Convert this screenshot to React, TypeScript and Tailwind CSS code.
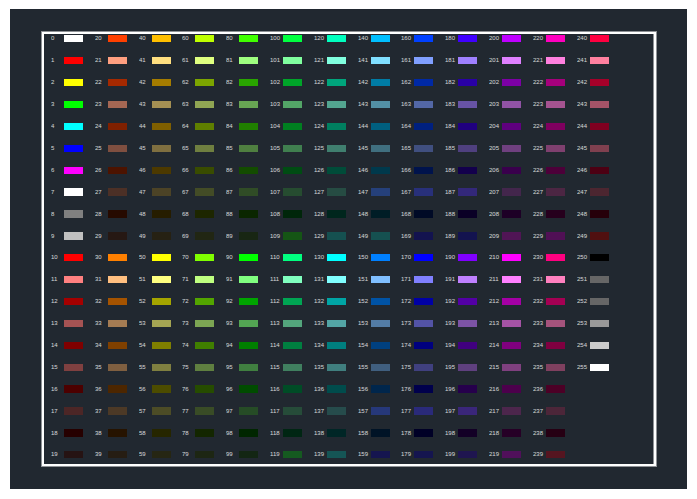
// AutoCAD colour index chart
const overrides: Record<number, string> = {
  109: "#155515",
  119: "#155a20",
  129: "#155050",
  139: "#155555",
  147: "#25407a",
  149: "#155050",
  157: "#26387a",
  159: "#15154f",
  167: "#28307a",
  169: "#13134f",
  177: "#2a2a7a",
  179: "#15154f",
  187: "#33287a",
  189: "#13134f",
  197: "#3a267a",
  199: "#1f1550",
  209: "#501555",
  219: "#50105a",
  229: "#501055",
  239: "#551520",
  249: "#501010",
  250: "#000000",
  251: "#666666",
  252: "#666666",
  253: "#999999",
  254: "#cccccc",
  255: "#ffffff",
};

const basics = ["#ffffff", "#ff0000", "#ffff00", "#00ff00", "#00ffff", "#0000ff", "#ff00ff", "#ffffff", "#808080", "#c0c0c0"];
const values = [255, 165, 127, 76, 38];

function hue(h: number, n: number) {
  const k = (n + h / 60) % 6;
  return 1 - Math.max(0, Math.min(k, 4 - k, 1));
}

function colorFor(i: number) {
  if (overrides[i]) return overrides[i];
  if (i < 10) return basics[i];
  const h = (Math.floor(i / 10) - 1) * 15;
  const v = values[Math.floor((i % 10) / 2)];
  const odd = i % 2 === 1;
  const channel = (n: number) => {
    const c = hue(h, n);
    return Math.round(v * (odd ? 0.5 + 0.5 * c : c));
  };
  return `rgb(${channel(5)},${channel(3)},${channel(1)})`;
}

const tallRows = [7, 8, 9, 16, 17, 18];

function Swatch({ index }: { index: number }) {
  const tall = tallRows.includes(index < 240 ? index % 20 : index - 240);
  return (
    <div className={`flex items-center ${tall ? "h-[8px]" : "h-[7px]"}`}>
      <span className="w-[13px] text-[6px] leading-[7px] text-white opacity-80">{index}</span>
      <div className="w-[19px] h-full" style={{ backgroundColor: colorFor(index) }} />
    </div>
  );
}

export default function App() {
  const items = Array.from({ length: 256 }, (_, i) => i);
  return (
    <div className="w-[697px] h-[499px] bg-white pl-[10px] pt-[9px] font-['Liberation_Sans',sans-serif]">
      <div className="w-[677px] h-[480px] bg-[#212830] pl-[31px] pt-[22px]">
        <div className="w-[616px] h-[436px] border border-[#8f9296]">
          <div className="h-full border-2 border-white shadow-[inset_-1px_0_0_#8f9296] pl-[7px] pt-px">
            <div className="grid grid-flow-col grid-cols-[44px_44px_43px_44px_44px_44px_44px_43px_44px_44px_44px_44px_44px] grid-rows-[22px_22px_22px_22px_22px_22px_21px_22px_22px_22px_22px_22px_22px_22px_22px_21px_22px_22px_22px_22px]">
              {items.map((i) => (
                <Swatch key={i} index={i} />
              ))}
            </div>
          </div>
        </div>
      </div>
    </div>
  );
}
